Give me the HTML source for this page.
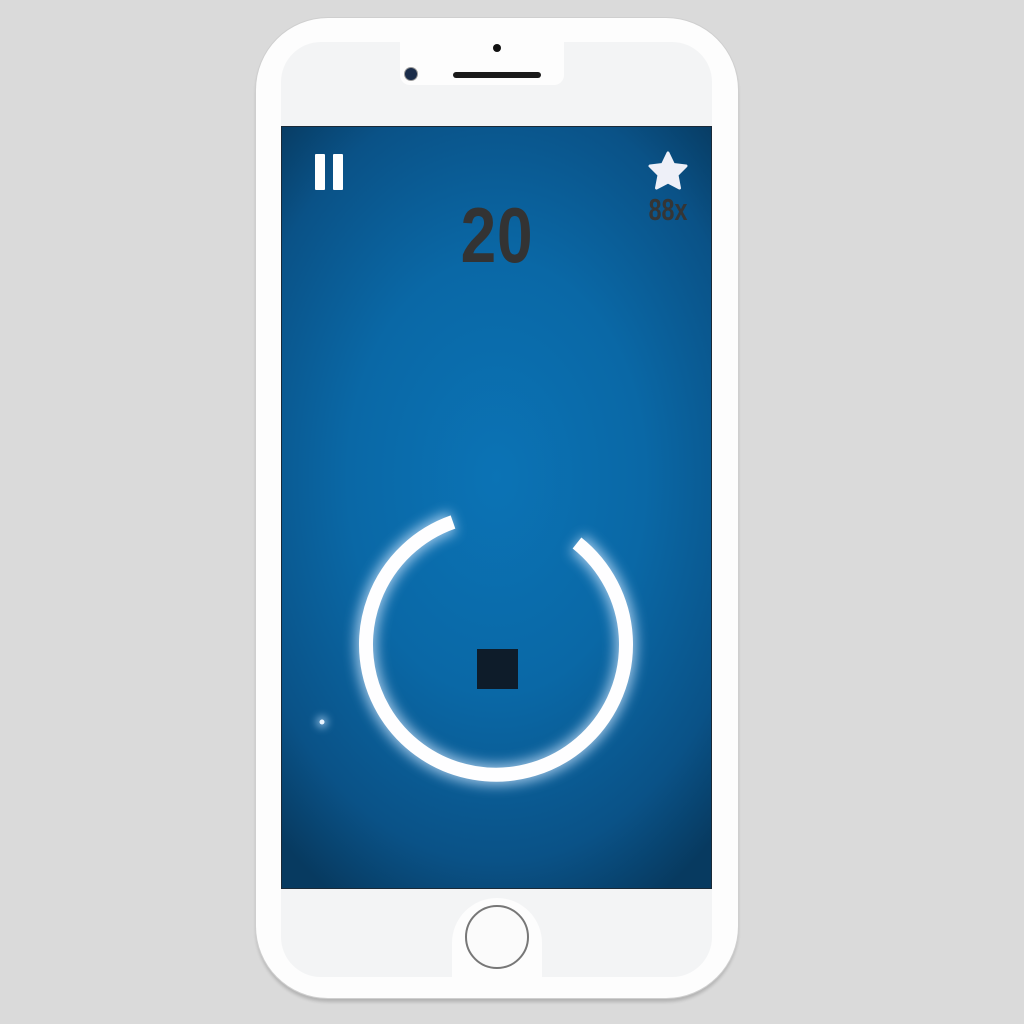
<!DOCTYPE html>
<html><head><meta charset="utf-8"><style>
html,body{margin:0;padding:0;width:1024px;height:1024px;background:#dadada;overflow:hidden;font-family:"Liberation Sans",sans-serif}
.abs{position:absolute}
#phone{left:256px;top:18px;width:482px;height:980px;border-radius:72px;background:#fdfdfd;box-shadow:0 0 0 1px #cfcfcf, 0 4px 3px rgba(0,0,0,.18)}
#panel{left:281px;top:42px;width:431px;height:935px;border-radius:40px;background:#f3f4f5}
#screen{left:281px;top:126px;width:431px;height:763px;background:radial-gradient(ellipse 330px 480px at 50% 46%,#0b73b5 0%,#0a68a6 45%,#0a5287 80%,#073a60 100%);border:1px solid #1a2a38;box-sizing:border-box}
#notch{left:400px;top:42px;width:164px;height:43px;background:#fdfdfd;border-radius:0 0 10px 10px}
#hb{left:452px;top:898px;width:90px;height:80px;background:#fdfdfd;border-radius:45px 45px 0 0}
</style></head><body>
<div id="phone" class="abs"></div>
<div id="panel" class="abs"></div>
<div id="notch" class="abs"></div>
<div class="abs" style="left:493px;top:44px;width:8px;height:8px;border-radius:50%;background:#111"></div>
<div class="abs" style="left:453px;top:72px;width:88px;height:6px;border-radius:3px;background:#1a1a1a"></div>
<div class="abs" style="left:405px;top:68px;width:12px;height:12px;border-radius:50%;background:#1b2d4a;box-shadow:0 0 0 1px #999"></div>
<div id="screen" class="abs"></div>
<div id="hb" class="abs"></div>
<div class="abs" style="left:465px;top:905px;width:64px;height:64px;border-radius:50%;box-sizing:border-box;border:2px solid #777;background:#fbfbfb"></div>
<svg class="abs" style="left:0;top:0" width="1024" height="1024">
<defs>
<filter id="g" filterUnits="userSpaceOnUse" x="0" y="0" width="1024" height="1024"><feGaussianBlur stdDeviation="6"/></filter>
<filter id="g2" filterUnits="userSpaceOnUse" x="280" y="680" width="90" height="90"><feGaussianBlur stdDeviation="4"/></filter>
</defs>
<path d="M453 522 A130 130 0 1 0 577 543" fill="none" stroke="#cfe6ff" stroke-width="22" opacity=".7" filter="url(#g)"/>
<path d="M453 522 A130 130 0 1 0 577 543" fill="none" stroke="#fefeff" stroke-width="14"/>
<rect x="477" y="649" width="41" height="40" fill="#0e1c2a"/>
<circle cx="322" cy="722" r="6" fill="#bfe0ff" opacity=".6" filter="url(#g2)"/>
<circle cx="322" cy="722" r="2.5" fill="#e8f4ff"/>
<rect x="315" y="154" width="10" height="36" rx="1" fill="#fff"/>
<rect x="333" y="154" width="10" height="36" rx="1" fill="#fff"/>
<path d="M668 153 L673.5 164.5 L686 166 L677 175 L679.5 188 L668 182 L656.5 188 L659 175 L650 166 L662.5 164.5 Z" fill="#eef0f8" stroke="#eef0f8" stroke-width="3" stroke-linejoin="round"/>
</svg>
<div class="abs" style="left:397px;top:194px;width:200px;text-align:center;font-size:78px;font-weight:bold;color:#333;line-height:82px;transform:scaleX(.82);letter-spacing:1px">20</div>
<div class="abs" style="left:630px;top:192px;width:76px;text-align:center;font-size:31px;font-weight:bold;color:#353535;line-height:36px;transform:scaleX(.75)">88x</div>
</body></html>
